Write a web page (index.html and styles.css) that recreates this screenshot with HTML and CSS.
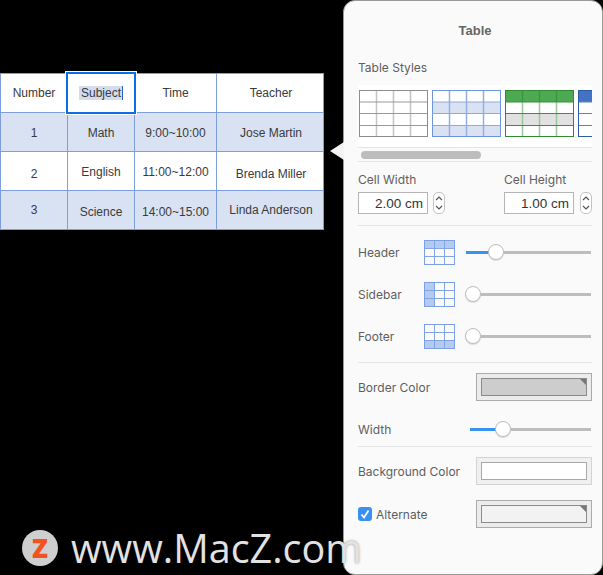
FILE: index.html
```html
<!DOCTYPE html>
<html lang="en">
<head>
<meta charset="utf-8">
<title>Table</title>
<link rel="stylesheet" href="styles.css">
</head>
<body>
<main class="canvas">
  <table class="doc-table">
    <colgroup><col class="c1"><col class="c2"><col class="c3"><col class="c4"></colgroup>
    <tr><td>Number</td><td class="selected"><span class="sel-text">Subject</span></td><td>Time</td><td class="last">Teacher</td></tr>
    <tr class="alt"><td class="mid">1</td><td class="mid">Math</td><td class="mid">9:00~10:00</td><td class="mid last">Jose Martin</td></tr>
    <tr><td class="lower">2</td><td class="mid">English</td><td class="mid">11:00~12:00</td><td class="lower last">Brenda Miller</td></tr>
    <tr class="alt"><td>3</td><td class="low">Science</td><td class="low">14:00~15:00</td><td class="last">Linda Anderson</td></tr>
  </table>
</main>

<aside class="panel">
  <span class="arrow"></span>
  <h1 class="title">Table</h1>
  <div class="label styles-label">Table Styles</div>
  <div class="styles-strip">
    <svg class="thumb" width="69" height="47" viewBox="0 0 69 47"><path d="M17.5 0V47M34.5 0V47M51.5 0V47" stroke="#c4c4c4" stroke-width="1.5"/><path d="M0 12H69M0 23.5H69M0 35.5H69" stroke="#999" stroke-width="1"/><rect x=".5" y=".5" width="68" height="46" fill="none" stroke="#8c8c8c"/></svg>
    <svg class="thumb" width="69" height="47" viewBox="0 0 69 47"><path d="M0 12H69V23H0ZM0 35H69V47H0Z" fill="#d9e2f3"/><path d="M17.5 0V47M34.5 0V47M51.5 0V47" stroke="#94aee3" stroke-width="1.5"/><path d="M0 12H69M0 23.5H69M0 35.5H69" stroke="#8eaae0"/><rect x=".5" y=".5" width="68" height="46" fill="none" stroke="#6d94dc"/></svg>
    <svg class="thumb" width="69" height="47" viewBox="0 0 69 47"><path d="M0 0H69V12H0Z" fill="#4eaa52"/><path d="M0 23H69V35H0Z" fill="#e1e1e1"/><path d="M17.5 12V47M34.5 12V47M51.5 12V47" stroke="#9cc79c" stroke-width="1.5"/><path d="M17.5 0V12M34.5 0V12M51.5 0V12" stroke="#3f9443" stroke-width="1.5"/><path d="M0 12H69M0 23.5H69M0 35.5H69" stroke="#399039"/><rect x=".5" y=".5" width="68" height="46" fill="none" stroke="#2f8a33"/></svg>
    <svg class="thumb" width="69" height="47" viewBox="0 0 69 47"><path d="M0 0H69V12H0Z" fill="#4472c4"/><path d="M0 12H69M0 23.5H69M0 35.5H69" stroke="#5b80c4"/><rect x=".5" y=".5" width="68" height="46" fill="none" stroke="#2f5aa8"/></svg>
  </div>
  <div class="scroller"><span class="scroll-thumb"></span></div>

  <section class="sizes">
    <div class="size">
      <div class="label">Cell Width</div>
      <div class="size-field">
        <div class="input">2.00 cm</div>
        <span class="stepper"><svg width="8" height="16" viewBox="0 0 8 16"><path d="M1 5 4 2 7 5M1 11 4 14 7 11" fill="none" stroke="#555" stroke-width="1.2"/></svg></span>
      </div>
    </div>
    <div class="size">
      <div class="label">Cell Height</div>
      <div class="size-field">
        <div class="input">1.00 cm</div>
        <span class="stepper"><svg width="8" height="16" viewBox="0 0 8 16"><path d="M1 5 4 2 7 5M1 11 4 14 7 11" fill="none" stroke="#555" stroke-width="1.2"/></svg></span>
      </div>
    </div>
  </section>

  <section class="bands">
    <div class="band">
      <div class="label band-label">Header</div>
      <svg class="mini" width="31" height="25" viewBox="0 0 31 25"><path d="M0 0H31V8H0Z" fill="#b4caef"/><path d="M10.5 0V25M20.5 0V25M0 8.500H31M0 16.500H31" stroke="#82a5e6"/><rect x=".5" y=".5" width="30" height="24" fill="none" stroke="#7ba0e6"/></svg>
      <div class="slider"><span class="fill" style="width:23px"></span><span class="knob"></span><span class="rest"></span></div>
    </div>
    <div class="band">
      <div class="label band-label">Sidebar</div>
      <svg class="mini" width="31" height="25" viewBox="0 0 31 25"><path d="M0 0H10V25H0Z" fill="#b4caef"/><path d="M10.5 0V25M20.500 0V25M0 8.500H31M0 16.500H31" stroke="#82a5e6"/><rect x=".5" y=".5" width="30" height="24" fill="none" stroke="#7ba0e6"/></svg>
      <div class="slider"><span class="knob"></span><span class="rest"></span></div>
    </div>
    <div class="band">
      <div class="label band-label">Footer</div>
      <svg class="mini" width="31" height="25" viewBox="0 0 31 25"><path d="M0 17H31V25H0Z" fill="#b4caef"/><path d="M10.5 0V25M20.5 0V25M0 8.500H31M0 16.500H31" stroke="#82a5e6"/><rect x=".5" y=".5" width="30" height="24" fill="none" stroke="#7ba0e6"/></svg>
      <div class="slider"><span class="knob"></span><span class="rest"></span></div>
    </div>
  </section>

  <section class="border-sec">
    <div class="color-row">
      <div class="label">Border Color</div>
      <div class="swatch"><div class="swatch-inner gray corner"></div></div>
    </div>
    <div class="width-row">
      <div class="label">Width</div>
      <div class="slider short"><span class="fill" style="width:26px"></span><span class="knob"></span><span class="rest"></span></div>
    </div>
  </section>

  <section class="bg-sec">
    <div class="color-row">
      <div class="label">Background Color</div>
      <div class="swatch light"><div class="swatch-inner white"></div></div>
    </div>
    <div class="color-row alt-row">
      <div class="check-wrap">
        <span class="check"><svg width="14" height="14" viewBox="0 0 14 14"><path d="M3.500 7.500 6 10.500 10.500 3.500" fill="none" stroke="#fff" stroke-width="1.800"/></svg></span>
        <span class="label">Alternate</span>
      </div>
      <div class="swatch"><div class="swatch-inner pale corner"></div></div>
    </div>
  </section>
</aside>

<div class="watermark">
  <span class="wm-logo">Z</span>
  <span class="wm-text">www.MacZ.com</span>
</div>
</body>
</html>
```

FILE: styles.css
```css
* { box-sizing: border-box; }
html, body { margin: 0; height: 100%; }
body {
  background: #000;
  width: 603px;
  height: 575px;
  overflow: hidden;
  position: relative;
  font-family: "Liberation Sans", Arial, sans-serif;
}

/* document table */
.canvas { padding-top: 73px; }
.doc-table {
  border-collapse: collapse;
  table-layout: fixed;
  width: 323px;
  margin-left: 0;
  background: #fff;
  color: #3a3a3a;
  font-size: 12px;
  text-align: center;
}
.c1 { width: 67px; }
.c2 { width: 67px; }
.c3 { width: 82px; }
.c4 { width: 107px; }
.doc-table td {
  height: 39px;
  padding: 0;
  border: 1px solid #7e9fdf;
}
.doc-table td.last { padding-left: 2px; }
.doc-table .alt td { background: #d9e2f3; }
.doc-table td.mid { padding-top: 2px; }
.doc-table td.low { padding-top: 4px; }
.doc-table td.lower { padding-top: 6px; }
.selected { position: relative; }
.selected::after {
  content: "";
  position: absolute;
  left: -2px; top: -2px; right: -2px; bottom: -2px;
  border: 2px solid #0a6fe6;
  box-shadow: 0 0 0 1px #fff;
}
.sel-text {
  display: inline-block;
  padding: 0 0 0 2px;
  width: 44px;
  background: #d3dcef;
  border-right: 1px solid #2a62c8;
  line-height: 14px;
  text-align: left;
}

/* inspector panel */
.panel {
  position: absolute;
  left: 343px;
  top: 0;
  width: 260px;
  height: 575px;
  padding: 0 10px 0 14px;
  background: #fafafa;
  border: 1px solid #9a9a9a;
  border-radius: 12px;
  color: #5e5e5e;
}
.arrow {
  position: absolute;
  left: -14px;
  top: 141px;
  width: 0;
  height: 0;
  border-style: solid;
  border-width: 9px 14px 9px 0;
  border-color: transparent #f4f4f4 transparent transparent;
}
.title {
  margin: 0;
  height: 58px;
  line-height: 59px;
  font-size: 13px;
  font-weight: 700;
  text-align: center;
  color: #666;
}
.label {
  font-family: Inter, "Liberation Sans", sans-serif;
  font-size: 12px;
  line-height: 17px;
  color: #5e5e5e;
}
.styles-strip {
  display: flex;
  gap: 4px;
  margin-top: 9px;
  height: 63px;
  padding: 5px 0 0 1px;
  overflow: hidden;
  background: #fff;
  border-bottom: 1px solid #e4e4e4;
}
.thumb { flex: none; display: block; }
.scroller {
  height: 14px;
  padding: 3px 3px 0;
  border-bottom: 1px solid #e4e4e4;
}
.scroll-thumb {
  display: block;
  width: 120px;
  height: 8px;
  border-radius: 4px;
  background: #bdbdbd;
}

.sizes {
  display: flex;
  justify-content: space-between;
  height: 64px;
  padding-top: 9px;
  border-bottom: 1px solid #e4e4e4;
}
.size-field {
  display: flex;
  align-items: center;
  gap: 5px;
  margin-top: 4px;
}
.input {
  width: 70px;
  height: 22px;
  border: 1px solid #b5b5b5;
  background: #fff;
  font-size: 13.5px;
  line-height: 21px;
  text-align: right;
  padding-right: 4px;
  color: #333;
}
.stepper {
  width: 12px;
  height: 22px;
  display: flex;
  align-items: center;
  justify-content: center;
  background: #fff;
  border: 1px solid #c4c4c4;
  border-radius: 5px;
}
.sizes .size:last-child .stepper { margin-left: 1px; }

.bands {
  padding: 5px 0;
  border-bottom: 1px solid #e4e4e4;
}
.band {
  display: flex;
  align-items: center;
  height: 42px;
}
.band-label { width: 66px; flex: none; }
.mini { flex: none; display: block; }
.slider {
  display: flex;
  align-items: center;
  flex: 1;
  margin: 0 1px 0 11px;
}
.fill {
  flex: none;
  height: 3px;
  margin-right: -1px;
  background: #3a93f0;
}
.knob {
  flex: none;
  width: 16px;
  height: 16px;
  border-radius: 50%;
  background: #fff;
  border: 1px solid #bdbdbd;
  box-shadow: 0 1px 1px rgba(0,0,0,.12);
  position: relative;
}
.knob:first-child { margin-left: -1px; }
.rest {
  flex: 1;
  height: 3px;
  background: #bdbdbd;
}

.border-sec {
  height: 84px;
  padding-top: 10px;
  border-bottom: 1px solid #e4e4e4;
}
.color-row {
  display: flex;
  align-items: center;
  justify-content: space-between;
  height: 28px;
}
.swatch {
  width: 116px;
  height: 28px;
  padding: 4px;
  background: #ececec;
  border: 1px solid #ababab;
}
.swatch.light { border-color: #d4d4d4; background: #f0f0f0; }
.swatch-inner {
  height: 18px;
  border: 1px solid #8a8a8a;
  position: relative;
}
.swatch-inner.gray { background: #cdcdcd; }
.swatch-inner.white { background: #fff; border-color: #a8a8a8; }
.swatch-inner.pale { background: #f2f2f2; }
.corner::after {
  content: "";
  position: absolute;
  top: 0;
  right: 0;
  width: 0;
  height: 0;
  border-style: solid;
  border-width: 0 6px 6px 0;
  border-color: transparent #777 transparent transparent;
}
.width-row {
  display: flex;
  align-items: center;
  justify-content: space-between;
  height: 28px;
  margin-top: 14px;
}
.slider.short { flex: none; width: 121px; margin: 0 1px 0 0; }

.bg-sec { padding-top: 10px; }
.alt-row { margin-top: 15px; }
.check-wrap { display: flex; align-items: center; gap: 4px; }
.check {
  width: 14px;
  height: 14px;
  border-radius: 3px;
  background: #3b8ff0;
  display: block;
}
.check svg { display: block; }

/* watermark */
.watermark {
  position: absolute;
  left: 22px;
  top: 529px;
  display: flex;
  align-items: center;
  gap: 13px;
  pointer-events: none;
}
.wm-logo {
  width: 36px;
  height: 36px;
  border-radius: 50%;
  background: #cfcfcf;
  color: #f4511e;
  font-family: "Open Sans", sans-serif;
  font-weight: 800;
  font-size: 26px;
  line-height: 36px;
  text-align: center;
}
.wm-text {
  font-family: "Open Sans", sans-serif;
  font-size: 39.5px;
  line-height: 38px;
  color: #e2e2e2;
  text-shadow: 0 0 3px rgba(0,0,0,.4);
}
```
